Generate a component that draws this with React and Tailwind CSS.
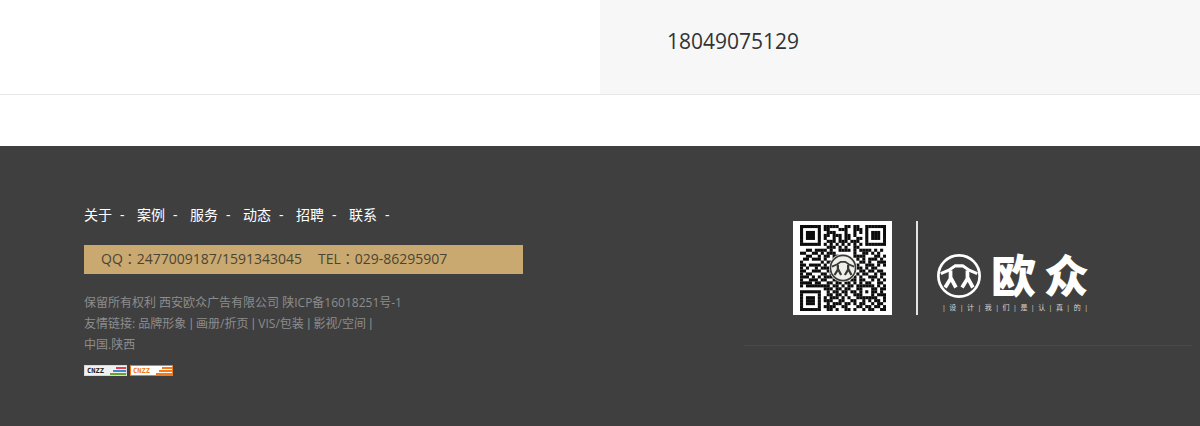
import React from "react";

const navItems = ["关于", "案例", "服务", "动态", "招聘", "联系"];

const friendLinks = ["品牌形象", "画册/折页", "VIS/包装", "影视/空间"];

const slogan = "设计我们是认真的";

const qrRows = [
  "11111110111110011011001111111",
  "10000010110001110011101000001",
  "10111010011100010010101011101",
  "10111010110111011010001011101",
  "10111010100101011001101011101",
  "10000010011101110111001000001",
  "11111110101010101010101111111",
  "00000000011101010011000000000",
  "00110111101001111010111101010",
  "11001101011100000010011010100",
  "00110010110110000011110001101",
  "01101110100100000001010111010",
  "10000001011000000000110100111",
  "11011110100000000001001110101",
  "10100101110000000001101011000",
  "11001110010000000000110110110",
  "10110001101000000001011001011",
  "11101010111000000010100111010",
  "10011101100110100110110010101",
  "11110110011011011010101100110",
  "10111111110110101101111110101",
  "00000000111011011001100011011",
  "11111110010110110110101011010",
  "10000010011011010011100010111",
  "10111010101110101001111111001",
  "10111010111001100110010101101",
  "10111010010111011010110010110",
  "10000010111100110001101101101",
  "11111110011010011010010110011",
];

// Round emblem with the figures under one roof
const Emblem = ({ className }) => {
  return (
    <svg viewBox="94 114 136 136" className={className} fill="none" stroke="currentColor" aria-hidden="true">
      <circle cx="162" cy="182" r="61" strokeWidth="8" />
      <path d="M108 175 L132 165 L151 152 H173 L192 165 L216 175" strokeWidth="9" />
      <path d="M137 166 V190 L121 216 M137 186 L153 216" strokeWidth="11" />
      <path d="M187 166 V190 L171 216 M187 186 L203 216" strokeWidth="11" />
    </svg>
  );
};

const QrCode = () => {
  return (
    <div className="grid place-items-center w-[99px] h-[94px] bg-white shrink-0">
      <svg viewBox="0 0 29 29" className="w-[86px] h-[86px] col-start-1 row-start-1" role="img" aria-label="QR">
        {qrRows.map((row, y) =>
          row.split("").map((cell, x) =>
            cell === "1" ? <rect key={`${x}-${y}`} x={x} y={y} width="1.04" height="1.04" fill="#0c0c0c" /> : null
          )
        )}
      </svg>
      <div className="col-start-1 row-start-1 rounded-full bg-[#eeeeea] text-[#3a3a36]">
        <Emblem className="w-7 h-7" />
      </div>
    </div>
  );
};

const StatBadge = ({ box, text, bars }) => {
  return (
    <a href="#stats" className="block">
      <svg viewBox="0 0 43 11" className="w-[43px] h-[11px]">
        <rect x="0.5" y="0.5" width="42" height="10" fill={box.fill} stroke={box.stroke} />
        <text x="3" y="8" fontSize="7" fontWeight="700" fontFamily="DejaVu Sans Mono, monospace" fill={text}>
          CNZZ
        </text>
        <path d="M32 3 H42" stroke={bars[0]} strokeWidth="2" />
        <path d="M29 6 H42" stroke={bars[1]} strokeWidth="2" />
        <path d="M26 9 H42" stroke={bars[2]} strokeWidth="2" />
      </svg>
    </a>
  );
};

const Footer = () => {
  return (
    <footer className="flex justify-between bg-[#3f3f3f] pl-[7%] min-h-[280px]">
      <div className="w-[439px] pt-[59px]">
        <nav className="flex text-sm leading-5 text-white">
          {navItems.map((item) => (
            <div key={item} className="flex gap-2 w-[53px]">
              <a href="#nav">{item}</a>
              <span>-</span>
            </div>
          ))}
        </nav>

        <p className="flex gap-4 mt-5 px-[17px] h-[29px] leading-7 text-sm bg-[#c9a96f] text-[#4b4435] font-['Open_Sans','Noto_Sans_CJK_TC',sans-serif]">
          <span>QQ：2477009187/1591343045</span>
          <span>TEL：029-86295907</span>
        </p>

        <div className="mt-[18px] text-xs leading-[21px] text-[#8d8d8d]">
          <p>保留所有权利 西安欧众广告有限公司 陕ICP备16018251号-1</p>
          <p>
            友情链接:{" "}
            {friendLinks.map((link) => (
              <React.Fragment key={link}>
                <a href="#friend">{link}</a>
                <span className="align-top font-['Liberation_Sans',sans-serif]"> | </span>
              </React.Fragment>
            ))}
          </p>
          <p>中国.陕西</p>
        </div>

        <div className="flex gap-[3px] mt-[10px]">
          <StatBadge box={{ fill: "#f1f1f1", stroke: "#d8d8d8" }} text="#222222" bars={["#e83c4b", "#2f8fd0", "#66a52c"]} />
          <StatBadge box={{ fill: "#ffffff", stroke: "#f47a1c" }} text="#f47a1c" bars={["#f47a1c", "#f47a1c", "#f47a1c"]} />
        </div>
      </div>

      <div className="w-[448px] mr-2 mt-[75px] mb-20 border-b border-[#494949]">
        <div className="flex pl-[49px]">
          <QrCode />
          <div className="w-[2px] h-[94px] ml-6 bg-[#e4e4e4]" />
          <div className="ml-[18px] pt-8">
            <div className="flex items-center gap-[9px] text-white">
              <Emblem className="w-[46px] h-[46px]" />
              <div className="flex gap-2 mt-1 text-[45px] leading-[42px] font-black font-['Liberation_Sans','Noto_Sans_CJK_SC',sans-serif]">
                <span>欧</span>
                <span>众</span>
              </div>
            </div>
            <p className="flex justify-between ml-1 w-[150px] px-[2px] mt-[5px] text-[7px] leading-2 text-[#d8d8d8]">
              {slogan.split("").map((char) => (
                <React.Fragment key={char}>
                  <span>|</span>
                  <span>{char}</span>
                </React.Fragment>
              ))}
              <span>|</span>
            </p>
          </div>
        </div>
      </div>
    </footer>
  );
};

const App = () => {
  return (
    <div className="bg-white font-['Open_Sans','Noto_Sans_CJK_SC',sans-serif]">
      <section className="grid grid-cols-2 border-b border-[#e8e8e8] mb-[51px]">
        <div />
        <div className="bg-[#f7f7f7] h-[94px] pl-[67px] pt-[25px]">
          <p className="text-[21px] leading-8 text-[#333333]">18049075129</p>
        </div>
      </section>
      <Footer />
    </div>
  );
};

export default App;
